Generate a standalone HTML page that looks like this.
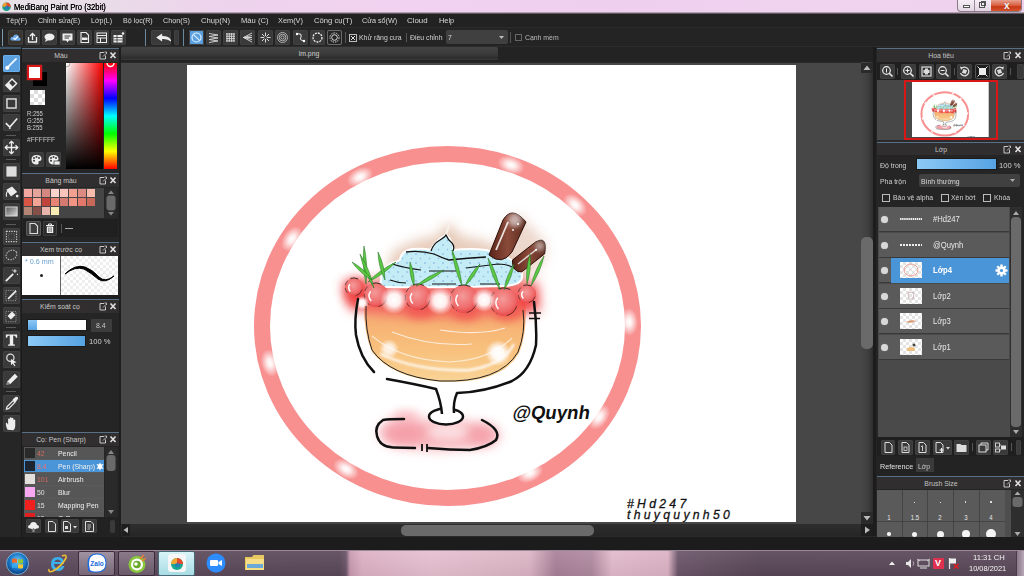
<!DOCTYPE html>
<html><head><meta charset="utf-8"><title>MediBang Paint Pro</title>
<style>
*{margin:0;padding:0;box-sizing:border-box}
html,body{width:1024px;height:576px;overflow:hidden;background:#1c1c1c;font-family:"Liberation Sans",sans-serif;}
.a{position:absolute}
.t{position:absolute;white-space:nowrap;font-size:8px;line-height:9px;color:#d2d2d2;transform:scaleX(.86);transform-origin:0 50%}
.tc{position:absolute;white-space:nowrap;font-size:8px;line-height:9px;color:#c4c4c4;transform:translateX(-50%) scaleX(.86);}
.btn{position:absolute;background:#3a3a3a;border-radius:2px;box-shadow:inset 0 0 0 1px #414141}
.btn svg{position:absolute;left:0;top:0}
.ph{position:absolute;height:14px;background:#302e2e;border-top:1px solid #56708a}
.sep{position:absolute;width:1px;background:#4a4a4a}
</style></head><body>
<div class="a" style="left:0;top:0;width:1024px;height:14px;background:linear-gradient(90deg,#e6e2e6 0%,#e9dce8 10%,#eed3ed 22%,#f1d2f0 40%,#eed0ee 60%,#f0d3ef 80%,#eed2ec 100%)"></div>
<div class="a" style="left:0;top:12px;width:1024px;height:2px;background:linear-gradient(#d9c6d8,#3a3238)"></div>
<svg class="a" style="left:1px;top:1px" width="11" height="11" viewBox="0 0 11 11"><circle cx="5.5" cy="5.8" r="4.3" fill="#1aa088"/><path d="M5.5 1.5 A4.3 4.3 0 0 1 9.8 5.8 L5.5 5.8Z" fill="#e84a2a"/><path d="M1.2 5.8 A4.3 4.3 0 0 1 5.5 1.5 L5.5 5.8Z" fill="#f0a030"/><circle cx="6" cy="6.5" r="2" fill="#2a6ad0" opacity=".7"/></svg>
<div class="t" style="left:14px;top:2px;font-size:9px;line-height:10px;color:#000;transform:scaleX(.85);text-shadow:0 0 .4px #000">MediBang Paint Pro (32bit)</div>
<div class="a" style="left:957px;top:0;width:65px;height:12px;border:1px solid #8a7a88;border-top:none;border-radius:0 0 4px 4px;background:linear-gradient(#f6eef6,#e2d6e2);overflow:hidden"><div class="a" style="left:16px;top:0;width:1px;height:12px;background:#9a8a98"></div><div class="a" style="left:33px;top:0;width:31px;height:12px;background:linear-gradient(#e8a090 0%,#d86040 45%,#c83818 55%,#d85a30 100%)"></div><div class="a" style="left:5px;top:5px;width:7px;height:3px;background:#fff;border:1px solid #555"></div><div class="a" style="left:21px;top:2px;width:6px;height:6px;border:1px solid #555;background:#eee"></div><div class="a" style="left:23px;top:1px;width:5px;height:5px;border:1px solid #555"></div><div class="a" style="left:46px;top:0px;font-size:10px;font-weight:bold;color:#fff;line-height:11px;text-shadow:0 0 1px #802010">x</div></div>
<div class="a" style="left:0;top:14px;width:1024px;height:13px;background:#222"></div>
<div class="a" style="left:0;top:27px;width:1024px;height:1px;background:#2b2b2b"></div>
<div class="t" style="left:5.6px;top:16px;color:#d8d8d8;transform:scaleX(0.875)">Tệp(F)</div>
<div class="t" style="left:37.5px;top:16px;color:#d8d8d8;transform:scaleX(0.887)">Chỉnh sửa(E)</div>
<div class="t" style="left:91px;top:16px;color:#d8d8d8;transform:scaleX(0.878)">Lớp(L)</div>
<div class="t" style="left:122.6px;top:16px;color:#d8d8d8;transform:scaleX(0.891)">Bộ lọc(R)</div>
<div class="t" style="left:163.3px;top:16px;color:#d8d8d8;transform:scaleX(0.906)">Chọn(S)</div>
<div class="t" style="left:201px;top:16px;color:#d8d8d8;transform:scaleX(0.959)">Chụp(N)</div>
<div class="t" style="left:240.5px;top:16px;color:#d8d8d8;transform:scaleX(0.952)">Màu (C)</div>
<div class="t" style="left:278px;top:16px;color:#d8d8d8;transform:scaleX(0.921)">Xem(V)</div>
<div class="t" style="left:313.7px;top:16px;color:#d8d8d8;transform:scaleX(0.957)">Công cụ(T)</div>
<div class="t" style="left:362.4px;top:16px;color:#d8d8d8;transform:scaleX(0.899)">Cửa sổ(W)</div>
<div class="t" style="left:407.4px;top:16px;color:#d8d8d8;transform:scaleX(0.985)">Cloud</div>
<div class="t" style="left:438.6px;top:16px;color:#d8d8d8;transform:scaleX(0.924)">Help</div>
<div class="a" style="left:0;top:28px;width:1024px;height:19px;background:#242424"></div>
<div class="a" style="left:0;top:46px;width:1024px;height:1px;background:#2c2c2c"></div>
<div class="a" style="left:2px;top:29px;width:1px;height:17px;background:#7a9ab0"></div>
<div class="a" style="left:145px;top:29px;width:1px;height:17px;background:#6a8aa0"></div>
<div class="a" style="left:183px;top:29px;width:1px;height:17px;background:#6a8aa0"></div>
<div class="btn" style="left:8px;top:30px;width:15px;height:15px;background:#3b3530;"><svg width="15" height="15" viewBox="0 0 15 15"><path d="M4 10.5 Q2 10.5 2.5 8.2 Q3 6.5 5 7 Q5.5 4 8.5 4.5 Q11 5 11 7.5 Q13 7.8 12.5 10 Q12 10.8 11 10.8Z" fill="#6aa8e8"/><path d="M5.5 8 L7 9.5 L9.8 6.5" fill="none" stroke="#fff" stroke-width="1.1"/></svg></div>
<div class="btn" style="left:25px;top:30px;width:15px;height:15px;"><svg width="15" height="15" viewBox="0 0 15 15"><path d="M3.5 7 V12 H11.5 V7" fill="none" stroke="#eee" stroke-width="1.3"/><path d="M7.5 10 V3.5 M5 6 L7.5 3.5 L10 6" fill="none" stroke="#eee" stroke-width="1.3"/></svg></div>
<div class="btn" style="left:42px;top:30px;width:15px;height:15px;"><svg width="15" height="15" viewBox="0 0 15 15"><ellipse cx="7.5" cy="7" rx="5" ry="3.4" fill="#eee"/><path d="M4 9 L3 12 L6.5 10Z" fill="#eee"/></svg></div>
<div class="btn" style="left:60px;top:30px;width:15px;height:15px;"><svg width="15" height="15" viewBox="0 0 15 15"><rect x="2.5" y="3.5" width="10" height="7" fill="#eee"/><path d="M6 10 L7.5 12.5 L9 10Z" fill="#eee"/><path d="M4.5 6 H10.5 M4.5 8 H9" stroke="#3a3a3a" stroke-width="1"/></svg></div>
<div class="btn" style="left:77px;top:30px;width:15px;height:15px;"><svg width="15" height="15" viewBox="0 0 15 15"><path d="M4 2.5 H9 L11.5 5 V12.5 H4Z" fill="none" stroke="#eee" stroke-width="1.1"/><rect x="5" y="7.5" width="5.5" height="2.5" fill="#eee"/></svg></div>
<div class="btn" style="left:94px;top:30px;width:15px;height:15px;"><svg width="15" height="15" viewBox="0 0 15 15"><rect x="3" y="3" width="9.5" height="9.5" fill="none" stroke="#eee" stroke-width="1"/><path d="M3 5.5 H12.5 M3 8 H12.5 M6.5 8 V12.5" stroke="#eee" stroke-width="1"/></svg></div>
<div class="btn" style="left:111px;top:30px;width:15px;height:15px;"><svg width="15" height="15" viewBox="0 0 15 15"><rect x="2.5" y="5" width="9" height="7.5" fill="#eee"/><path d="M2.5 7.5 H11.5 M2.5 10 H11.5 M6 5 V12.5" stroke="#3a3a3a" stroke-width=".8"/><circle cx="12" cy="3.5" r="1.3" fill="#eee"/></svg></div>
<div class="btn" style="left:151px;top:30px;width:20px;height:15px;"><svg width="20" height="15" viewBox="0 0 15 15"><g transform="scale(1.33 1) translate(-2 0)"><path d="M4 7.5 L8.5 3.5 V6 Q15 6 15.5 12 Q13 8.5 8.5 9 V11.5Z" fill="#eee"/></g></svg></div>
<div class="btn" style="left:174px;top:30px;width:5px;height:15px"></div>
<div class="btn" style="left:189px;top:30px;width:15px;height:15px;background:#5aa0e0;"><svg width="15" height="15" viewBox="0 0 15 15"><circle cx="7.5" cy="7.5" r="4.5" fill="none" stroke="#dff0ff" stroke-width="1.2"/><path d="M4.3 4.3 L10.7 10.7" stroke="#dff0ff" stroke-width="1.2"/></svg></div>
<div class="btn" style="left:206px;top:30px;width:15px;height:15px;"><svg width="15" height="15" viewBox="0 0 15 15"><path d="M3 3.5 L12 5 L3 6.5 L12 8 L3 9.5 L12 11 L3 12.5" fill="none" stroke="#ddd" stroke-width=".9"/></svg></div>
<div class="btn" style="left:223px;top:30px;width:15px;height:15px;"><svg width="15" height="15" viewBox="0 0 15 15"><path d="M3 4 H12 M3 6.3 H12 M3 8.6 H12 M3 10.9 H12 M4 3 V12 M6.3 3 V12 M8.6 3 V12 M10.9 3 V12" stroke="#ddd" stroke-width=".9"/></svg></div>
<div class="btn" style="left:240px;top:30px;width:15px;height:15px;"><svg width="15" height="15" viewBox="0 0 15 15"><path d="M3.5 7.5 L12 3 M3.5 7.5 L12 5.5 M3.5 7.5 L12 7.5 M3.5 7.5 L12 9.5 M3.5 7.5 L12 12" stroke="#ddd" stroke-width=".9"/></svg></div>
<div class="btn" style="left:258px;top:30px;width:15px;height:15px;"><svg width="15" height="15" viewBox="0 0 15 15"><path d="M7.5 2.5 V12.5 M2.5 7.5 H12.5 M4 4 L11 11 M11 4 L4 11" stroke="#ddd" stroke-width="1"/><circle cx="7.5" cy="7.5" r="1.5" fill="#3a3a3a"/></svg></div>
<div class="btn" style="left:275px;top:30px;width:15px;height:15px;"><svg width="15" height="15" viewBox="0 0 15 15"><circle cx="7.5" cy="7.5" r="5" fill="none" stroke="#ccc" stroke-width=".8"/><circle cx="7.5" cy="7.5" r="3.3" fill="none" stroke="#ccc" stroke-width=".8"/><circle cx="7.5" cy="7.5" r="1.6" fill="none" stroke="#ccc" stroke-width=".8"/></svg></div>
<div class="btn" style="left:293px;top:30px;width:15px;height:15px;"><svg width="15" height="15" viewBox="0 0 15 15"><path d="M4 4 Q9 3 8 7 Q6 10 11 11" fill="none" stroke="#ddd" stroke-width="1.1"/><circle cx="4" cy="4" r="1.2" fill="#fff"/><circle cx="11" cy="11" r="1.2" fill="#fff"/></svg></div>
<div class="btn" style="left:310px;top:30px;width:15px;height:15px;"><svg width="15" height="15" viewBox="0 0 15 15"><circle cx="7.5" cy="7.5" r="4.5" fill="none" stroke="#eee" stroke-width="1.3" stroke-dasharray="2 1"/></svg></div>
<div class="btn" style="left:327px;top:30px;width:15px;height:15px;background:#252525;box-shadow:inset 0 0 0 1px #6a6a6a;"><svg width="15" height="15" viewBox="0 0 15 15"><circle cx="7.5" cy="7.5" r="4.6" fill="none" stroke="#ddd" stroke-width="1" stroke-dasharray="1.5 1"/><circle cx="7.5" cy="7.5" r="2.8" fill="none" stroke="#ddd" stroke-width="1"/></svg></div>
<div class="sep" style="left:345px;top:32px;height:11px;background:#555"></div>
<div class="a" style="left:349px;top:34px;width:8px;height:8px;border:1px solid #bbb"></div>
<svg class="a" style="left:349px;top:34px" width="8" height="8"><path d="M2 2 L6 6 M6 2 L2 6" stroke="#ddd" stroke-width="1"/></svg>
<div class="t" style="left:359px;top:33px">Khử răng cưa</div>
<div class="sep" style="left:406px;top:33px;height:9px;background:#555"></div>
<div class="t" style="left:410px;top:33px">Điều chỉnh</div>
<div class="a" style="left:446px;top:30px;width:62px;height:14px;background:#404040;border-radius:2px"></div>
<div class="t" style="left:448px;top:33px;color:#ddd">7</div>
<svg class="a" style="left:499px;top:36px" width="5" height="3"><path d="M0 0 H5 L2.5 3Z" fill="#bbb"/></svg>
<div class="sep" style="left:510px;top:32px;height:11px;background:#555"></div>
<div class="a" style="left:515px;top:34px;width:7px;height:7px;border:1px solid #666"></div>
<div class="t" style="left:525px;top:33px;color:#bbb">Cạnh mềm</div>
<div class="a" style="left:0;top:47px;width:22px;height:490px;background:#262626"></div>
<div class="a" style="left:21px;top:47px;width:1px;height:490px;background:#1b1b1b"></div>
<div class="a" style="left:0;top:47px;width:21px;height:2px;background:#3e5566"></div>
<div class="btn" style="left:3px;top:55px;width:17px;height:17px;background:#5aa0de;box-shadow:inset 0 0 0 1px #6ab0ee;"><svg width="17" height="17" viewBox="0 0 15 15"><path d="M3 12 L11.5 3.5" stroke="#eef6ff" stroke-width="1.6" stroke-linecap="round"/><circle cx="3.8" cy="11.2" r="1.8" fill="#fff"/></svg></div>
<div class="btn" style="left:3px;top:75px;width:17px;height:17px;"><svg width="17" height="17" viewBox="0 0 15 15"><path d="M2.5 9 L8 3.5 L12 7.5 L6.5 13Z" fill="none" stroke="#eee" stroke-width="1.3"/><path d="M2.5 9 L5 6.5 L9 10.5 L6.5 13Z" fill="#eee"/></svg></div>
<div class="btn" style="left:3px;top:95px;width:17px;height:17px;"><svg width="17" height="17" viewBox="0 0 15 15"><rect x="3.5" y="3.5" width="8" height="8" fill="none" stroke="#ddd" stroke-width="1.3"/></svg></div>
<div class="btn" style="left:3px;top:114px;width:17px;height:17px;"><svg width="17" height="17" viewBox="0 0 15 15"><path d="M2.5 8 L6 11.5 L12.5 4" fill="none" stroke="#eee" stroke-width="1.4"/><circle cx="6" cy="12.5" r=".8" fill="#ddd"/></svg></div>
<div class="btn" style="left:3px;top:139px;width:17px;height:17px;"><svg width="17" height="17" viewBox="0 0 15 15"><path d="M7.5 2 V13 M2 7.5 H13" stroke="#eee" stroke-width="1.2"/><path d="M5.5 4 L7.5 2 L9.5 4 M5.5 11 L7.5 13 L9.5 11 M4 5.5 L2 7.5 L4 9.5 M11 5.5 L13 7.5 L11 9.5" fill="none" stroke="#eee" stroke-width="1.1"/></svg></div>
<div class="btn" style="left:3px;top:163px;width:17px;height:17px;"><svg width="17" height="17" viewBox="0 0 15 15"><rect x="3" y="3" width="9" height="9" fill="#ddd"/></svg></div>
<div class="btn" style="left:3px;top:183px;width:17px;height:17px;"><svg width="17" height="17" viewBox="0 0 15 15"><path d="M3 6 L8 3 L12.5 8 L7 12 Z" fill="#eee"/><path d="M4 7 Q2 11 3.5 12" stroke="#eee" fill="none" stroke-width="1"/><circle cx="12.5" cy="11.5" r="1.2" fill="#eee"/></svg></div>
<div class="btn" style="left:3px;top:203px;width:17px;height:17px;"><svg width="17" height="17" viewBox="0 0 15 15"><defs><linearGradient id="gr1" x1="0" y1="0" x2="1" y2="1"><stop offset="0" stop-color="#555"/><stop offset="1" stop-color="#ddd"/></linearGradient></defs><rect x="2.5" y="3.5" width="10" height="8" fill="url(#gr1)" stroke="#ddd" stroke-width=".8"/></svg></div>
<div class="btn" style="left:3px;top:228px;width:17px;height:17px;"><svg width="17" height="17" viewBox="0 0 15 15"><rect x="3" y="3" width="9" height="9" fill="none" stroke="#ccc" stroke-width="1" stroke-dasharray="1.2 1"/><rect x="5" y="5" width="5" height="5" fill="none" stroke="#888" stroke-width=".6" stroke-dasharray="1 1"/></svg></div>
<div class="btn" style="left:3px;top:247px;width:17px;height:17px;"><svg width="17" height="17" viewBox="0 0 15 15"><ellipse cx="7.5" cy="7" rx="5" ry="4" transform="rotate(-30 7.5 7)" fill="none" stroke="#bbb" stroke-width="1" stroke-dasharray="1.2 1"/></svg></div>
<div class="btn" style="left:3px;top:267px;width:17px;height:17px;"><svg width="17" height="17" viewBox="0 0 15 15"><path d="M2.5 12.5 L9 6" stroke="#eee" stroke-width="1.6"/><path d="M10.5 2 V5 M9 3.5 H12 M12.5 6 L13 7 M8 2.5 L8.5 3" stroke="#eee" stroke-width=".9"/></svg></div>
<div class="btn" style="left:3px;top:287px;width:17px;height:17px;"><svg width="17" height="17" viewBox="0 0 15 15"><rect x="2.5" y="3" width="9" height="9" fill="none" stroke="#999" stroke-width=".8" stroke-dasharray="1 1"/><path d="M4.5 10.5 L11.5 3.5" stroke="#eee" stroke-width="1.5"/></svg></div>
<div class="btn" style="left:3px;top:307px;width:17px;height:17px;"><svg width="17" height="17" viewBox="0 0 15 15"><rect x="2.5" y="4" width="9" height="9" fill="none" stroke="#999" stroke-width=".8" stroke-dasharray="1 1"/><path d="M4 8 L8 4 L11 7 L7 11Z" fill="#eee"/></svg></div>
<div class="btn" style="left:3px;top:331px;width:17px;height:17px;"><svg width="17" height="17" viewBox="0 0 15 15"><path d="M2.5 3 H12.5 V6 H11.5 Q11.2 4 9 4 V11.5 Q9 12 10.5 12 V13 H4.5 V12 Q6 12 6 11.5 V4 Q3.8 4 3.5 6 H2.5Z" fill="#eee"/></svg></div>
<div class="btn" style="left:3px;top:351px;width:17px;height:17px;"><svg width="17" height="17" viewBox="0 0 15 15"><circle cx="6.5" cy="6" r="3.2" fill="none" stroke="#ddd" stroke-width="1.1"/><path d="M7 7 L12 10 L9.5 10.5 L11 13 L10 13.5 L8.5 11 L7 12.5Z" fill="#eee"/></svg></div>
<div class="btn" style="left:3px;top:371px;width:17px;height:17px;"><svg width="17" height="17" viewBox="0 0 15 15"><path d="M3 12 L4 9 L10.5 2.5 L13 5 L6.5 11.5Z" fill="#eee"/><path d="M3 12 L4 9 L6.5 11.5Z" fill="#888"/></svg></div>
<div class="btn" style="left:3px;top:395px;width:17px;height:17px;"><svg width="17" height="17" viewBox="0 0 15 15"><path d="M3 12.5 L3.5 10.5 L9 5 L10.5 6.5 L5 12Z" fill="none" stroke="#eee" stroke-width="1.1"/><path d="M8.5 4 L11 1.8 Q12.5 1.2 13.2 2.2 Q13.8 3.2 12.5 4.5 L11 6.5Z" fill="#eee"/></svg></div>
<div class="btn" style="left:3px;top:415px;width:17px;height:17px;"><svg width="17" height="17" viewBox="0 0 15 15"><path d="M4 13 Q2.5 10 2.5 8 Q2.5 6.5 3.6 7 L4.5 8.5 V3.5 Q5.3 2.5 6 3.5 V7 V2.5 Q6.8 1.5 7.6 2.5 V7 V3 Q8.4 2 9.2 3 V7.5 V4.5 Q10 3.6 10.8 4.5 V10 Q10.5 13 9 13.5Z" fill="#eee"/></svg></div>
<div class="a" style="left:6px;top:135px;width:10px;height:1px;background:#5a5a5a"></div>
<div class="a" style="left:6px;top:159px;width:10px;height:1px;background:#5a5a5a"></div>
<div class="a" style="left:6px;top:224px;width:10px;height:1px;background:#5a5a5a"></div>
<div class="a" style="left:6px;top:327px;width:10px;height:1px;background:#5a5a5a"></div>
<div class="a" style="left:6px;top:391px;width:10px;height:1px;background:#5a5a5a"></div>
<div class="a" style="left:22px;top:47px;width:97px;height:490px;background:#252525"></div>
<div class="a" style="left:119px;top:47px;width:2px;height:490px;background:#1e1e1e"></div>
<div class="ph" style="left:22px;top:48px;width:97px"></div>
<div class="tc" style="left:61px;top:51px;color:#c8c8c8">Màu</div>
<svg class="a" style="left:99px;top:51px" width="18" height="9" viewBox="0 0 18 9"><path d="M5 1.5 H1 V8 H6.5 V4.5" fill="none" stroke="#c8c8c8" stroke-width="1"/><path d="M4 5.5 L7 2.5 M5.5 1 H7.5 V3" fill="none" stroke="#c8c8c8" stroke-width=".9"/><path d="M11.5 1.5 L16.5 7 M16.5 1.5 L11.5 7" stroke="#e0e0e0" stroke-width="1.6"/></svg>
<div class="a" style="left:33px;top:72px;width:14px;height:14px;background:#000"></div>
<div class="a" style="left:27px;top:65px;width:15px;height:15px;background:#fff;border:2px solid #d81818;box-shadow:0 0 1px #f33"></div>
<div class="a" style="left:30px;top:90px;width:15px;height:15px;background:#fff;background-image:linear-gradient(45deg,#ddd 25%,transparent 25%,transparent 75%,#ddd 75%),linear-gradient(45deg,#ddd 25%,transparent 25%,transparent 75%,#ddd 75%);background-size:8px 8px;background-position:0 0,4px 4px"></div>
<div class="t" style="left:27px;top:110px;font-size:7px;line-height:8px;color:#d0d0d0;transform:scaleX(.85)">R:255</div>
<div class="t" style="left:27px;top:117px;font-size:7px;line-height:8px;color:#d0d0d0;transform:scaleX(.85)">G:255</div>
<div class="t" style="left:27px;top:124px;font-size:7px;line-height:8px;color:#d0d0d0;transform:scaleX(.85)">B:255</div>
<div class="t" style="left:27px;top:136px;font-size:7px;line-height:8px;color:#c8c8c8;transform:scaleX(.95)">#FFFFFF</div>
<div class="btn" style="left:29px;top:152px;width:15px;height:15px"><svg width="15" height="15"><path d="M7.5 3 Q12.5 3 12.5 7 Q12.5 9 10.5 9 Q9 9 9.5 10.5 Q10 12.5 7.5 12.5 Q2.5 12.5 2.5 7.5 Q2.5 3 7.5 3Z" fill="#eee"/><circle cx="5" cy="6" r="1" fill="#3a3a3a"/><circle cx="7.5" cy="5" r="1" fill="#3a3a3a"/><circle cx="10" cy="6" r="1" fill="#3a3a3a"/><circle cx="5" cy="8.8" r="1" fill="#3a3a3a"/></svg></div>
<div class="btn" style="left:46px;top:152px;width:15px;height:15px"><svg width="15" height="15"><path d="M7.5 3 Q12.5 3 12.5 7 Q12.5 9 10.5 9 Q9 9 9.5 10.5 Q10 12.5 7.5 12.5 Q2.5 12.5 2.5 7.5 Q2.5 3 7.5 3Z" fill="#eee"/><circle cx="5" cy="6" r="1" fill="#3a3a3a"/><circle cx="7.5" cy="5" r="1" fill="#3a3a3a"/><circle cx="10" cy="6" r="1" fill="#3a3a3a"/><circle cx="5" cy="8.8" r="1" fill="#3a3a3a"/><rect x="8" y="9" width="6" height="4" fill="#eee" stroke="#3a3a3a" stroke-width=".7"/></svg></div>
<div class="a" style="left:66px;top:63px;width:37px;height:106px;background:linear-gradient(to top,#000 0%,rgba(0,0,0,0) 100%),linear-gradient(to right,#fff 0%,#f00 100%)"></div>
<div class="a" style="left:104px;top:63px;width:13px;height:106px;background:linear-gradient(#f00 0%,#f0f 16.7%,#00f 33.3%,#0ff 50%,#0f0 66.7%,#ff0 83.3%,#f00 100%)"></div>
<svg class="a" style="left:104px;top:63px" width="13" height="6"><path d="M3 0 A3.5 3.5 0 0 0 10 0" fill="none" stroke="#fff" stroke-width="1.4"/></svg>
<svg class="a" style="left:66px;top:63px" width="6" height="6"><path d="M0 4 A4 4 0 0 0 4 0" fill="none" stroke="#aaa" stroke-width="1"/></svg>
<div class="ph" style="left:22px;top:173px;width:97px"></div>
<div class="tc" style="left:61px;top:176px;color:#c8c8c8">Bảng màu</div>
<svg class="a" style="left:99px;top:176px" width="18" height="9" viewBox="0 0 18 9"><path d="M5 1.5 H1 V8 H6.5 V4.5" fill="none" stroke="#c8c8c8" stroke-width="1"/><path d="M4 5.5 L7 2.5 M5.5 1 H7.5 V3" fill="none" stroke="#c8c8c8" stroke-width=".9"/><path d="M11.5 1.5 L16.5 7 M16.5 1.5 L11.5 7" stroke="#e0e0e0" stroke-width="1.6"/></svg>
<div class="a" style="left:23px;top:188px;width:81px;height:30px;background:#454545"></div>
<div class="a" style="left:24px;top:189px;width:8px;height:8px;background:#f2a8a0"></div>
<div class="a" style="left:33px;top:189px;width:8px;height:8px;background:#e4a49c"></div>
<div class="a" style="left:42px;top:189px;width:8px;height:8px;background:#d48880"></div>
<div class="a" style="left:51px;top:189px;width:8px;height:8px;background:#f8d4cc"></div>
<div class="a" style="left:60px;top:189px;width:8px;height:8px;background:#f9c4bc"></div>
<div class="a" style="left:69px;top:189px;width:8px;height:8px;background:#f2a090"></div>
<div class="a" style="left:78px;top:189px;width:8px;height:8px;background:#dc8a82"></div>
<div class="a" style="left:87px;top:189px;width:8px;height:8px;background:#f8bcac"></div>
<div class="a" style="left:24px;top:198px;width:8px;height:8px;background:#d85444"></div>
<div class="a" style="left:33px;top:198px;width:8px;height:8px;background:#f2a494"></div>
<div class="a" style="left:42px;top:198px;width:8px;height:8px;background:#c0443c"></div>
<div class="a" style="left:51px;top:198px;width:8px;height:8px;background:#e88474"></div>
<div class="a" style="left:60px;top:198px;width:8px;height:8px;background:#d47a70"></div>
<div class="a" style="left:69px;top:198px;width:8px;height:8px;background:#f29484"></div>
<div class="a" style="left:78px;top:198px;width:8px;height:8px;background:#e2786a"></div>
<div class="a" style="left:87px;top:198px;width:8px;height:8px;background:#c86858"></div>
<div class="a" style="left:24px;top:207px;width:8px;height:8px;background:#b48474"></div>
<div class="a" style="left:33px;top:207px;width:8px;height:8px;background:#845048"></div>
<div class="a" style="left:42px;top:207px;width:8px;height:8px;background:#e8b4ac"></div>
<div class="a" style="left:51px;top:207px;width:8px;height:8px;background:#f8ecb4"></div>
<div class="a" style="left:105px;top:188px;width:12px;height:30px;background:#2a2a2a"></div>
<svg class="a" style="left:105px;top:188px" width="12" height="30"><path d="M3 6 L6 2.5 L9 6Z" fill="#888"/><rect x="1.5" y="7.5" width="9" height="15" rx="3" fill="#6a6a6a"/><path d="M3 24 L6 27.5 L9 24Z" fill="#888"/></svg>
<div class="a" style="left:23px;top:219px;width:95px;height:18px;background:#202020"></div>
<div class="btn" style="left:26px;top:221px;width:15px;height:15px;background:#3e3e3e;box-shadow:inset 0 0 0 1px #5a5a5a"><svg width="15" height="15"><path d="M4 2.5 H9 L11.5 5 V12.5 H4Z" fill="none" stroke="#ddd" stroke-width="1.1"/></svg></div>
<div class="btn" style="left:43px;top:221px;width:14px;height:15px;background:#2c2c2c"><svg width="14" height="15"><path d="M3 4.5 H11 M5.5 4.5 V3 H8.5 V4.5" stroke="#eee" fill="none" stroke-width="1"/><rect x="3.8" y="5.5" width="6.4" height="6.5" fill="#eee"/><path d="M5.6 6.5 V11 M7 6.5 V11 M8.4 6.5 V11" stroke="#555" stroke-width=".6"/></svg></div>
<div class="a" style="left:61px;top:224px;width:1px;height:9px;background:#555"></div>
<div class="a" style="left:65px;top:228px;width:8px;height:1px;background:#aaa"></div>
<div class="ph" style="left:22px;top:242px;width:97px"></div>
<div class="tc" style="left:61px;top:245px;color:#c8c8c8">Xem trước cọ</div>
<svg class="a" style="left:99px;top:245px" width="18" height="9" viewBox="0 0 18 9"><path d="M5 1.5 H1 V8 H6.5 V4.5" fill="none" stroke="#c8c8c8" stroke-width="1"/><path d="M4 5.5 L7 2.5 M5.5 1 H7.5 V3" fill="none" stroke="#c8c8c8" stroke-width=".9"/><path d="M11.5 1.5 L16.5 7 M16.5 1.5 L11.5 7" stroke="#e0e0e0" stroke-width="1.6"/></svg>
<div class="a" style="left:22px;top:256px;width:38px;height:39px;background:#fff"></div>
<div class="a" style="left:60px;top:256px;width:1px;height:39px;background:#666"></div>
<div class="a" style="left:61px;top:256px;width:57px;height:39px;background:#fff;background-image:linear-gradient(45deg,#eee 25%,transparent 25%,transparent 75%,#eee 75%),linear-gradient(45deg,#eee 25%,transparent 25%,transparent 75%,#eee 75%);background-size:6px 6px;background-position:0 0,3px 3px"></div>
<div class="t" style="left:25px;top:257px;font-size:8px;color:#6aa0d0;transform:scaleX(.9)">* 0.6 mm</div>
<div class="a" style="left:40px;top:274px;width:3px;height:3px;border-radius:50%;background:#222"></div>
<svg class="a" style="left:61px;top:256px" width="57" height="39"><path d="M4 18 Q14 8 24 11 Q32 14 38 21 Q44 27 53 20 Q44 28 37 23 Q30 17 23 13 Q14 10 4 18Z" fill="#000" stroke="#000" stroke-width="1"/></svg>
<div class="a" style="left:22px;top:295px;width:97px;height:4px;background:#1e1e1e"></div>
<div class="ph" style="left:22px;top:299px;width:97px"></div>
<div class="tc" style="left:60px;top:302px;color:#c8c8c8">Kiểm soát cọ</div>
<svg class="a" style="left:99px;top:302px" width="18" height="9" viewBox="0 0 18 9"><path d="M5 1.5 H1 V8 H6.5 V4.5" fill="none" stroke="#c8c8c8" stroke-width="1"/><path d="M4 5.5 L7 2.5 M5.5 1 H7.5 V3" fill="none" stroke="#c8c8c8" stroke-width=".9"/><path d="M11.5 1.5 L16.5 7 M16.5 1.5 L11.5 7" stroke="#e0e0e0" stroke-width="1.6"/></svg>
<div class="a" style="left:28px;top:320px;width:58px;height:10px;background:#fff;box-shadow:0 0 0 1px #1a1a1a"></div>
<div class="a" style="left:28px;top:320px;width:9px;height:10px;background:linear-gradient(#8cc8f4,#5aa6e6)"></div>
<div class="a" style="left:91px;top:319px;width:21px;height:13px;background:#3c3c3c;border-radius:1px"></div>
<div class="t" style="left:96px;top:321px;color:#c8c8c8">8.4</div>
<div class="a" style="left:28px;top:336px;width:57px;height:10px;background:linear-gradient(90deg,#8ccaf6,#56a2e2);box-shadow:0 0 0 1px #1a1a1a"></div>
<div class="t" style="left:89px;top:337px;color:#d0d0d0;transform:scaleX(.95)">100 %</div>
<div class="ph" style="left:22px;top:432px;width:97px"></div>
<div class="tc" style="left:61px;top:435px;color:#c8c8c8">Cọ: Pen (Sharp)</div>
<svg class="a" style="left:99px;top:435px" width="18" height="9" viewBox="0 0 18 9"><path d="M5 1.5 H1 V8 H6.5 V4.5" fill="none" stroke="#c8c8c8" stroke-width="1"/><path d="M4 5.5 L7 2.5 M5.5 1 H7.5 V3" fill="none" stroke="#c8c8c8" stroke-width=".9"/><path d="M11.5 1.5 L16.5 7 M16.5 1.5 L11.5 7" stroke="#e0e0e0" stroke-width="1.6"/></svg>
<div class="a" style="left:24px;top:447px;width:80px;height:70px;background:#5a5a5a;overflow:hidden">
<div class="a" style="left:0;top:0px;width:80px;height:12px;background:#565656"></div>
<div class="a" style="left:1px;top:1px;width:10px;height:10px;background:#2a2a2a"></div>
<div class="t" style="left:13px;top:2px;color:#d06a60">42</div>
<div class="t" style="left:34px;top:2px;color:#f0f0f0">Pencil</div>
<div class="a" style="left:0;top:13px;width:80px;height:12px;background:#4a94d8"></div>
<div class="a" style="left:1px;top:14px;width:10px;height:10px;background:#1c2530"></div>
<div class="t" style="left:13px;top:15px;color:#f07070">8.4</div>
<div class="t" style="left:34px;top:15px;color:#f0f0f0">Pen (Sharp)</div>
<div class="a" style="left:0;top:26px;width:80px;height:12px;background:#565656"></div>
<div class="a" style="left:1px;top:27px;width:10px;height:10px;background:#e4e0dc"></div>
<div class="t" style="left:13px;top:28px;color:#d06a60">101</div>
<div class="t" style="left:34px;top:28px;color:#f0f0f0">Airbrush</div>
<div class="a" style="left:0;top:39px;width:80px;height:12px;background:#565656"></div>
<div class="a" style="left:1px;top:40px;width:10px;height:10px;background:#f8a8f0"></div>
<div class="t" style="left:13px;top:41px;color:#e0e0e0">50</div>
<div class="t" style="left:34px;top:41px;color:#f0f0f0">Blur</div>
<div class="a" style="left:0;top:52px;width:80px;height:12px;background:#565656"></div>
<div class="a" style="left:1px;top:53px;width:10px;height:10px;background:#f02020"></div>
<div class="t" style="left:13px;top:54px;color:#e0e0e0">15</div>
<div class="t" style="left:34px;top:54px;color:#f0f0f0">Mapping Pen</div>
<div class="a" style="left:0;top:65px;width:80px;height:12px;background:#565656"></div>
<div class="a" style="left:1px;top:66px;width:10px;height:10px;background:#e02020"></div>
<div class="t" style="left:13px;top:67px;color:#e0e0e0">15</div>
<div class="t" style="left:34px;top:67px;color:#f0f0f0">G-Pen</div>
</div>
<svg class="a" style="left:96px;top:462px" width="8" height="9"><path d="M4 0.5 L5 2.5 L7.5 2 L6 4.5 L7.5 7 L5 6.5 L4 8.5 L3 6.5 L0.5 7 L2 4.5 L0.5 2 L3 2.5Z" fill="#fff"/></svg>
<div class="a" style="left:105px;top:447px;width:12px;height:70px;background:#2a2a2a"></div>
<svg class="a" style="left:105px;top:447px" width="12" height="70"><path d="M3 7 L6 3 L9 7Z" fill="#888"/><rect x="1.5" y="8" width="9" height="16" rx="3" fill="#6a6a6a"/><path d="M3 63 L6 67 L9 63Z" fill="#888"/></svg>
<div class="a" style="left:22px;top:517px;width:97px;height:20px;background:#222"></div>
<div class="btn" style="left:26px;top:519px;width:15px;height:14px"><svg width="15" height="14" viewBox="0 0 15 14"><path d="M4 9.5 Q1.8 9.5 2 7.5 Q2.3 5.8 4 6 Q4.5 3 7.5 3 Q10.5 3 11 6 Q13 6 13 8 Q13 9.5 11 9.5Z" fill="#eee"/><path d="M7.5 13 V7.5 M5.3 9.7 L7.5 7.5 L9.7 9.7" stroke="#eee" fill="none" stroke-width="1.6"/><path d="M7.5 9 V13" stroke="#3a3a3a" stroke-width=".6"/></svg></div>
<div class="btn" style="left:45px;top:519px;width:13px;height:14px"><svg width="13" height="14" viewBox="0 0 13 14"><path d="M3.5 2.5 H8 L10.5 5 V12.5 H3.5Z" fill="none" stroke="#ddd" stroke-width="1"/></svg></div>
<div class="btn" style="left:61px;top:519px;width:18px;height:14px"><svg width="18" height="14" viewBox="0 0 18 14"><path d="M2.5 2.5 H7 L9.5 5 V12.5 H2.5Z" fill="none" stroke="#ddd" stroke-width="1"/><rect x="4" y="7" width="3" height="3" fill="#ddd"/><path d="M12 7 H16 L14 9.5Z" fill="#ddd"/></svg></div>
<div class="btn" style="left:82px;top:519px;width:15px;height:14px"><svg width="15" height="14" viewBox="0 0 15 14"><path d="M3.5 2.5 H9 L11.5 5 V12.5 H3.5Z" fill="none" stroke="#ddd" stroke-width="1"/><path d="M5.5 6 H9 M5.5 8 H9 M5.5 10 H8" stroke="#ddd" stroke-width=".8"/></svg></div>
<div class="a" style="left:110px;top:520px;width:5px;height:13px;background:#3a3a3a;border-radius:2px"></div>
<div class="a" style="left:121px;top:47px;width:755px;height:16px;background:#232323"></div>
<div class="a" style="left:121px;top:47px;width:377px;height:13px;background:linear-gradient(#444 0%,#3a3a3a 55%,#2c2c2c 85%,#3a3a3a 100%);border-radius:2px 2px 0 0"></div>
<div class="tc" style="left:309px;top:49px;color:#d0d0d0">lm.png</div>
<div class="a" style="left:121px;top:62px;width:740px;height:1px;background:#2a2a2a"></div>
<div class="a" style="left:121px;top:63px;width:740px;height:461px;background:#474747"></div>
<div class="a" style="left:861px;top:62px;width:12px;height:462px;background:linear-gradient(90deg,#474747,#3e3e3e 60%,#2e2e2e)"></div>
<svg class="a" style="left:861px;top:63px" width="12" height="10"><rect width="12" height="10" fill="#2a2a2a"/><path d="M2.5 7 L6 2.5 L9.5 7Z" fill="#bbb"/></svg>
<div class="a" style="left:861px;top:237px;width:12px;height:112px;background:#6a6a6a;border-radius:5px"></div>
<svg class="a" style="left:861px;top:512px" width="12" height="12"><rect width="12" height="12" fill="#2a2a2a"/><path d="M2.5 4 L6 8.5 L9.5 4Z" fill="#bbb"/></svg>
<div class="a" style="left:121px;top:524px;width:752px;height:12px;background:linear-gradient(#2e2e2e,#262626)"></div>
<svg class="a" style="left:122px;top:524px" width="8" height="12"><rect width="8" height="12" fill="#1e1e1e"/><path d="M6 3 L1.5 6 L6 9Z" fill="#bbb"/></svg>
<div class="a" style="left:401px;top:525px;width:193px;height:11px;background:#6a6a6a;border-radius:5px"></div>
<svg class="a" style="left:861px;top:524px" width="12" height="12"><rect width="12" height="12" fill="#1e1e1e"/><path d="M4 2.5 L9 6 L4 9.5Z" fill="#bbb"/></svg>
<div class="a" style="left:873px;top:47px;width:3px;height:490px;background:#1c1c1c"></div>
<div class="a" style="left:121px;top:536px;width:755px;height:1px;background:#2a2a2a"></div>
<svg class="a" style="left:187px;top:65px" width="609" height="457" viewBox="187 65 609 457"><defs>
<filter id="b05" x="-10%" y="-10%" width="120%" height="120%"><feGaussianBlur stdDeviation=".5"/></filter>
<filter id="b1" x="-50%" y="-50%" width="200%" height="200%"><feGaussianBlur stdDeviation="1"/></filter>
<filter id="b2" x="-50%" y="-50%" width="200%" height="200%"><feGaussianBlur stdDeviation="2.5"/></filter>
<filter id="b4" x="-50%" y="-50%" width="200%" height="200%"><feGaussianBlur stdDeviation="4"/></filter>
<filter id="b6" x="-50%" y="-50%" width="200%" height="200%"><feGaussianBlur stdDeviation="6"/></filter>
<filter id="b8" x="-50%" y="-50%" width="200%" height="200%"><feGaussianBlur stdDeviation="8"/></filter>
<radialGradient id="glow"><stop offset="0" stop-color="#fff" stop-opacity="1"/><stop offset=".45" stop-color="#fff" stop-opacity=".9"/><stop offset="1" stop-color="#fff" stop-opacity="0"/></radialGradient>
<radialGradient id="glow2"><stop offset="0" stop-color="#fff" stop-opacity="1"/><stop offset=".3" stop-color="#fff" stop-opacity=".85"/><stop offset="1" stop-color="#fff" stop-opacity="0"/></radialGradient>
<pattern id="dots" width="9" height="9" patternUnits="userSpaceOnUse"><rect width="9" height="9" fill="#c4ecf6"/><circle cx="2" cy="2" r=".8" fill="#78aee0"/><circle cx="6.5" cy="6.5" r=".8" fill="#8cbce6"/></pattern>
<linearGradient id="body" x1="0" y1="0" x2="0" y2="1"><stop offset="0" stop-color="#f6a088"/><stop offset=".3" stop-color="#f6b274"/><stop offset=".65" stop-color="#f8c27e"/><stop offset="1" stop-color="#f9d498"/></linearGradient>
<linearGradient id="choc" x1="0" y1="0" x2="1" y2="0"><stop offset="0" stop-color="#5a2418"/><stop offset=".5" stop-color="#8a4a3a"/><stop offset="1" stop-color="#5a2a1e"/></linearGradient>
</defs><g id="drw"><rect x="187" y="65" width="609" height="457" fill="#fff"/><ellipse cx="447.5" cy="326" rx="185.5" ry="172" fill="none" stroke="#f89090" stroke-width="16" filter="url(#b05)"/><ellipse cx="292" cy="239" rx="14" ry="9" transform="rotate(-56.9 292 239)" fill="url(#glow2)"/><ellipse cx="360" cy="177" rx="14" ry="9" transform="rotate(-26.8 360 177)" fill="url(#glow2)"/><ellipse cx="511" cy="165" rx="14" ry="9" transform="rotate(18.7 511 165)" fill="url(#glow2)"/><ellipse cx="575" cy="205" rx="14" ry="9" transform="rotate(42.2 575 205)" fill="url(#glow2)"/><ellipse cx="629" cy="322" rx="14" ry="9" transform="rotate(88.5 629 322)" fill="url(#glow2)"/><ellipse cx="599" cy="417" rx="14" ry="9" transform="rotate(124.9 599 417)" fill="url(#glow2)"/><ellipse cx="530" cy="473" rx="14" ry="9" transform="rotate(154.2 530 473)" fill="url(#glow2)"/><ellipse cx="346" cy="469" rx="14" ry="9" transform="rotate(-148.6 346 469)" fill="url(#glow2)"/><ellipse cx="270" cy="363" rx="14" ry="9" transform="rotate(-103.6 270 363)" fill="url(#glow2)"/><ellipse cx="440" cy="435" rx="56" ry="15" fill="#f7b4ba" filter="url(#b6)"/><ellipse cx="402" cy="432" rx="22" ry="13" fill="#f49aa4" filter="url(#b6)" opacity=".8"/><ellipse cx="483" cy="435" rx="16" ry="11" fill="#f49aa4" filter="url(#b6)" opacity=".7"/><ellipse cx="406" cy="416" rx="14" ry="6" fill="#f6a8b0" filter="url(#b4)" opacity=".6"/><ellipse cx="448" cy="432" rx="20" ry="8" fill="#fff" filter="url(#b4)" opacity=".55"/><path d="M492 262 L510 218 Q520 210 528 224 L544 240 Q550 252 540 268 L515 285 Z" fill="#e6c8b8" filter="url(#b6)" opacity=".7"/><path d="M392 252 Q420 236 438 236 Q448 212 460 236 Q500 240 522 268 L522 292 L380 292Z" fill="#e0bca6" filter="url(#b6)" opacity=".75"/><path d="M364 298 Q363 332 372 352 Q392 378 442 382 Q502 384 519 353 Q528 332 525 298 Z" fill="url(#body)"/><path d="M342 282 Q440 274 538 282 L540 312 Q440 322 350 310Z" fill="#f25252" filter="url(#b6)" opacity=".8"/><ellipse cx="356" cy="292" rx="12" ry="14" fill="#f03434" filter="url(#b4)" opacity=".75"/><ellipse cx="527" cy="298" rx="10" ry="12" fill="#f03434" filter="url(#b4)" opacity=".6"/><ellipse cx="420" cy="312" rx="14" ry="7" fill="#f04848" filter="url(#b4)" opacity=".6"/><ellipse cx="466" cy="314" rx="14" ry="7" fill="#f04848" filter="url(#b4)" opacity=".6"/><ellipse cx="508" cy="314" rx="14" ry="7" fill="#f04040" filter="url(#b4)" opacity=".6"/><path d="M380 354 Q420 372 470 370 Q504 364 514 344" fill="none" stroke="#fff" stroke-width="2.4" opacity=".9" filter="url(#b1)"/><path d="M372 336 Q400 360 450 362 Q490 360 512 338" fill="none" stroke="#fff" stroke-width="1.2" opacity=".6"/><path d="M392 332 Q430 347 472 344 M440 330 Q480 336 505 328" fill="none" stroke="#fff" stroke-width="1.2" opacity=".7"/><circle cx="498" cy="353" r="13" fill="url(#glow)"/><circle cx="389" cy="349" r="10" fill="url(#glow)" opacity=".8"/><path d="M382 286 Q380 270 392 264 Q399 262 401 260 Q402 252 412 250 Q424 249 431 251 Q436 242 446 236 Q452 242 453 251 Q470 249 486 251 Q505 255 515 264 Q522 270 521 278 Q520 284 505 285 Q440 287 382 286 Z" fill="none" stroke="#fff" stroke-width="4"/><path d="M382 286 Q380 270 392 264 Q399 262 401 260 Q402 252 412 250 Q424 249 431 251 Q436 242 446 236 Q452 242 453 251 Q470 249 486 251 Q505 255 515 264 Q522 270 521 278 Q520 284 505 285 Q440 287 382 286 Z" fill="url(#dots)"/><path d="M406 252 Q420 250 434 254 Q442 258 449 260 Q468 258 486 257" fill="none" stroke="#111" stroke-width="1.3"/><path d="M392 264 Q405 268 421 270 M429 271 H456 M390 280 Q398 283 406 283 M432 284 H456 M466 268 Q482 266 498 264 Q512 264 519 272 M480 284 H500" fill="none" stroke="#111" stroke-width="1.2"/><path d="M431 251 Q433 244 440 240 Q445 237 446 235 Q448 240 452 243 Q455 247 453 251" fill="none" stroke="#111" stroke-width="1.3"/><path d="M446 234 Q449 226 450 222" fill="none" stroke="#f8f0e8" stroke-width="2.2"/><path d="M489 255 L503 220 Q512 205 526 222 L512 252 Q502 266 489 255Z" fill="url(#choc)" stroke="#2a1008" stroke-width="1"/><path d="M496 250 L508 222" stroke="#fff" stroke-width="1.8" opacity=".85"/><ellipse cx="515" cy="220" rx="7" ry="7" fill="#fff" opacity=".6" filter="url(#b2)"/><circle cx="518" cy="224" r="1" fill="#fff"/><circle cx="513" cy="230" r=".9" fill="#fff"/><path d="M512.4 260.1 L535.4 242.1 Q547.9 235 544.6 253.9 L521.6 271.9 Q512 272 512.4 260.1Z" fill="url(#choc)" stroke="#2a1008" stroke-width="1"/><path d="M518 264 L537 249" stroke="#fff" stroke-width="1.4" opacity=".8"/><ellipse cx="540" cy="246" rx="5" ry="5" fill="#fff" opacity=".55" filter="url(#b2)"/><circle cx="536" cy="250" r=".9" fill="#fff"/><radialGradient id="cher" cx=".45" cy=".4" r=".6"><stop offset="0" stop-color="#f49a9a"/><stop offset=".7" stop-color="#f06c6c"/><stop offset="1" stop-color="#e84a4a"/></radialGradient><circle cx="354" cy="287" r="9" fill="url(#cher)"/><path d="M347.7 280.7 A9 9 0 0 0 349.5 294.6" fill="none" stroke="#2a2a2a" stroke-width="1" stroke-dasharray="5 3" opacity=".6"/><path d="M362.1 289.7 A9 9 0 0 1 355.8 295.7" fill="none" stroke="#3a2020" stroke-width="1" opacity=".7"/><path d="M349.9 284.3 Q347.2 287.9 350.4 291.5" fill="none" stroke="#fff" stroke-width="1.5"/><path d="M350.4 278.4 Q354.0 277.1 358.1 278.9" fill="none" stroke="#222" stroke-width=".9"/><circle cx="376" cy="295" r="12" fill="url(#cher)"/><path d="M367.6 286.6 A12 12 0 0 0 370.0 305.2" fill="none" stroke="#2a2a2a" stroke-width="1" stroke-dasharray="5 3" opacity=".6"/><path d="M386.8 298.6 A12 12 0 0 1 378.4 306.6" fill="none" stroke="#3a2020" stroke-width="1" opacity=".7"/><path d="M370.6 291.4 Q367.0 296.2 371.2 301.0" fill="none" stroke="#fff" stroke-width="1.5"/><path d="M371.2 283.6 Q376.0 281.8 381.4 284.2" fill="none" stroke="#222" stroke-width=".9"/><circle cx="418" cy="297" r="13" fill="url(#cher)"/><path d="M408.9 287.9 A13 13 0 0 0 411.5 308.1" fill="none" stroke="#2a2a2a" stroke-width="1" stroke-dasharray="5 3" opacity=".6"/><path d="M429.7 300.9 A13 13 0 0 1 420.6 309.6" fill="none" stroke="#3a2020" stroke-width="1" opacity=".7"/><path d="M412.1 293.1 Q408.2 298.3 412.8 303.5" fill="none" stroke="#fff" stroke-width="1.5"/><path d="M412.8 284.6 Q418.0 282.7 423.9 285.3" fill="none" stroke="#222" stroke-width=".9"/><circle cx="464" cy="299" r="14" fill="url(#cher)"/><path d="M454.2 289.2 A14 14 0 0 0 457.0 310.9" fill="none" stroke="#2a2a2a" stroke-width="1" stroke-dasharray="5 3" opacity=".6"/><path d="M476.6 303.2 A14 14 0 0 1 466.8 312.6" fill="none" stroke="#3a2020" stroke-width="1" opacity=".7"/><path d="M457.7 294.8 Q453.5 300.4 458.4 306.0" fill="none" stroke="#fff" stroke-width="1.5"/><path d="M458.4 285.7 Q464.0 283.6 470.3 286.4" fill="none" stroke="#222" stroke-width=".9"/><circle cx="504" cy="302" r="14" fill="url(#cher)"/><path d="M494.2 292.2 A14 14 0 0 0 497.0 313.9" fill="none" stroke="#2a2a2a" stroke-width="1" stroke-dasharray="5 3" opacity=".6"/><path d="M516.6 306.2 A14 14 0 0 1 506.8 315.6" fill="none" stroke="#3a2020" stroke-width="1" opacity=".7"/><path d="M497.7 297.8 Q493.5 303.4 498.4 309.0" fill="none" stroke="#fff" stroke-width="1.5"/><path d="M498.4 288.7 Q504.0 286.6 510.3 289.4" fill="none" stroke="#222" stroke-width=".9"/><circle cx="527" cy="294" r="9" fill="url(#cher)"/><path d="M520.7 287.7 A9 9 0 0 0 522.5 301.6" fill="none" stroke="#2a2a2a" stroke-width="1" stroke-dasharray="5 3" opacity=".6"/><path d="M535.1 296.7 A9 9 0 0 1 528.8 302.7" fill="none" stroke="#3a2020" stroke-width="1" opacity=".7"/><path d="M523.0 291.3 Q520.2 294.9 523.4 298.5" fill="none" stroke="#fff" stroke-width="1.5"/><path d="M523.4 285.4 Q527.0 284.1 531.0 285.9" fill="none" stroke="#222" stroke-width=".9"/><circle cx="394" cy="300" r="14" fill="url(#glow)"/><circle cx="440" cy="301" r="14" fill="url(#glow)"/><circle cx="484" cy="300" r="12" fill="url(#glow)"/><circle cx="362" cy="303" r="7" fill="url(#glow)"/><path d="M366 284 Q368.2 264.8 364 246 Q361.8 265.2 366 284Z" fill="#5cc844" stroke="#1e6a1e" stroke-width=".5"/><path d="M368 282 Q383.9 274.6 396 262 Q380.1 269.4 368 282Z" fill="#5cc844" stroke="#1e6a1e" stroke-width=".5"/><path d="M374 288 Q370.0 269.8 360 254 Q364.0 272.2 374 288Z" fill="#5cc844" stroke="#1e6a1e" stroke-width=".5"/><path d="M385 280 Q384.6 265.2 378 252 Q378.4 266.8 385 280Z" fill="#5cc844" stroke="#1e6a1e" stroke-width=".5"/><path d="M372 280 Q364.1 268.6 352 262 Q359.9 273.4 372 280Z" fill="#5cc844" stroke="#1e6a1e" stroke-width=".5"/><path d="M414 286 Q415.2 273.5 410 262 Q408.8 274.5 414 286Z" fill="#5cc844" stroke="#1e6a1e" stroke-width=".5"/><path d="M416 286 Q431.6 280.8 444 270 Q428.4 275.2 416 286Z" fill="#5cc844" stroke="#1e6a1e" stroke-width=".5"/><path d="M462 286 Q460.1 267.1 452 250 Q453.9 268.9 462 286Z" fill="#5cc844" stroke="#1e6a1e" stroke-width=".5"/><path d="M465 286 Q475.1 276.8 480 264 Q469.9 273.2 465 286Z" fill="#5cc844" stroke="#1e6a1e" stroke-width=".5"/><path d="M500 290 Q497.0 272.9 488 258 Q491.0 275.1 500 290Z" fill="#5cc844" stroke="#1e6a1e" stroke-width=".5"/><path d="M504 290 Q512.0 278.1 514 264 Q506.0 275.9 504 290Z" fill="#5cc844" stroke="#1e6a1e" stroke-width=".5"/><path d="M527 284 Q531.7 269.3 530 254 Q525.3 268.7 527 284Z" fill="#5cc844" stroke="#1e6a1e" stroke-width=".5"/><path d="M531 286 Q540.4 272.3 544 256 Q534.6 269.7 531 286Z" fill="#5cc844" stroke="#1e6a1e" stroke-width=".5"/><path d="M358 299 Q354 320 356 335 Q360 358 374 372" fill="none" stroke="#111" stroke-width="2.5" stroke-linecap="round"/><path d="M387 379 Q415 384 436 389" fill="none" stroke="#111" stroke-width="2.5" stroke-linecap="round"/><path d="M534 302 Q537 325 536 345 Q530 372 512 381 Q485 392 457 393" fill="none" stroke="#111" stroke-width="2.5" stroke-linecap="round"/><path d="M366 306 Q365 330 372 350 Q390 376 440 381 Q500 383 518 352 Q526 332 523 310" fill="none" stroke="#222" stroke-width="1" /><path d="M529 313 H541 M529 318.5 H540" stroke="#111" stroke-width="1.6"/><ellipse cx="446" cy="416.5" rx="17" ry="8" fill="#fff" stroke="#111" stroke-width="2.5"/><path d="M436 389 Q440 402 442 413 L454 413 Q453 402 457 393" fill="#fff" stroke="none"/><path d="M436 389 Q441 402 442 414 M457 393 Q453 402 454 413" fill="none" stroke="#111" stroke-width="2.5"/><path d="M404 419 Q388 419 383 420 Q374 426 377 436 Q380 447 393 447.5 L415 448" fill="none" stroke="#111" stroke-width="2.5" stroke-linecap="round"/><path d="M422 444 V451 M427 444 V452" stroke="#111" stroke-width="1.8"/><path d="M428 448 Q450 450 470 450 Q488 447 496 440 Q502 430 482 420" fill="none" stroke="#111" stroke-width="2.5" stroke-linecap="round"/><text x="0" y="0" transform="translate(512 418.5) skewX(-9)" font-family="Liberation Sans" font-weight="bold" font-size="19" fill="#111" textLength="77" lengthAdjust="spacingAndGlyphs">@Quynh</text><text x="627" y="507.5" font-family="Liberation Sans" font-style="italic" font-size="12.2" fill="#111" stroke="#111" stroke-width=".3" letter-spacing="3.3">#Hd247</text><text x="627" y="518.5" font-family="Liberation Sans" font-style="italic" font-size="12.2" fill="#111" stroke="#111" stroke-width=".3" letter-spacing="3.3">thuyquynh50</text></g></svg>
<div class="a" style="left:876px;top:47px;width:148px;height:491px;background:#242424"></div>
<div class="ph" style="left:877px;top:48px;width:147px;height:14px"></div>
<div class="tc" style="left:941px;top:51px;color:#c4c4c4">Hoa tiêu</div>
<svg class="a" style="left:1003px;top:51px" width="20" height="9" viewBox="0 0 20 9"><path d="M5 1.5 H1 V8 H6.5 V4.5" fill="none" stroke="#c8c8c8" stroke-width="1"/><path d="M4 5.5 L7 2.5 M5.5 1 H7.5 V3" fill="none" stroke="#c8c8c8" stroke-width=".9"/><path d="M12.5 1.5 L17.5 7 M17.5 1.5 L12.5 7" stroke="#e0e0e0" stroke-width="1.6"/></svg>
<div class="a" style="left:877px;top:62px;width:147px;height:18px;background:#1f1f1f"></div>
<div class="btn" style="left:880px;top:64px;width:15px;height:15px;"><svg width="15" height="15"><circle cx="6.5" cy="6.5" r="3.8" fill="none" stroke="#eee" stroke-width="1.2"/><path d="M9.2 9.2 L12.5 12.5" stroke="#eee" stroke-width="1.6"/><path d="M6.5 4.5 V8.5" stroke="#eee" stroke-width="1"/></svg></div>
<div class="btn" style="left:901px;top:64px;width:15px;height:15px;"><svg width="15" height="15"><circle cx="6.5" cy="6.5" r="3.8" fill="none" stroke="#eee" stroke-width="1.2"/><path d="M9.2 9.2 L12.5 12.5" stroke="#eee" stroke-width="1.6"/><path d="M4.5 6.5 H8.5 M6.5 4.5 V8.5" stroke="#eee" stroke-width="1"/></svg></div>
<div class="btn" style="left:919px;top:64px;width:15px;height:15px;"><svg width="15" height="15"><rect x="3" y="3" width="9" height="9" fill="none" stroke="#ddd" stroke-width="1.2"/><path d="M6 4.5 H9 V6 H10.5 V9 H9 V10.5 H6 V9 H4.5 V6 H6Z" fill="#ddd"/></svg></div>
<div class="btn" style="left:936px;top:64px;width:15px;height:15px;"><svg width="15" height="15"><circle cx="6.5" cy="6.5" r="3.8" fill="none" stroke="#eee" stroke-width="1.2"/><path d="M9.2 9.2 L12.5 12.5" stroke="#eee" stroke-width="1.6"/><path d="M4.5 6.5 H8.5" stroke="#eee" stroke-width="1"/></svg></div>
<div class="btn" style="left:957px;top:64px;width:15px;height:15px;"><svg width="15" height="15"><path d="M3.5 9 A4.3 4.3 0 1 0 5 4" fill="none" stroke="#ddd" stroke-width="1.3"/><path d="M3 2.5 L6 3.5 L4 6Z" fill="#ddd"/><rect x="5.5" y="5.5" width="4" height="4" transform="rotate(20 7.5 7.5)" fill="#ddd"/></svg></div>
<div class="btn" style="left:975px;top:64px;width:15px;height:15px;background:#1e1e1e;box-shadow:inset 0 0 0 1px #555;"><svg width="15" height="15"><rect x="4" y="4" width="7" height="7" fill="#eee"/><path d="M2.5 2.5 L5 5 M12.5 2.5 L10 5 M2.5 12.5 L5 10 M12.5 12.5 L10 10" stroke="#eee" stroke-width="1"/></svg></div>
<div class="btn" style="left:992px;top:64px;width:15px;height:15px;"><svg width="15" height="15"><path d="M11.5 9 A4.3 4.3 0 1 1 10 4" fill="none" stroke="#ddd" stroke-width="1.3"/><path d="M12 2.5 L9 3.5 L11 6Z" fill="#ddd"/><rect x="5.5" y="5.5" width="4" height="4" transform="rotate(-20 7.5 7.5)" fill="#ddd"/></svg></div>
<div class="a" style="left:897px;top:68px;width:1px;height:7px;background:#555"></div>
<div class="a" style="left:954px;top:68px;width:1px;height:7px;background:#555"></div>
<div class="a" style="left:1010px;top:68px;width:1px;height:7px;background:#555"></div>
<div class="btn" style="left:1017px;top:64px;width:7px;height:15px"></div>
<div class="a" style="left:877px;top:80px;width:147px;height:60px;background:#474747"></div>
<div class="a" style="left:904px;top:80px;width:94px;height:60px;border:2px solid #d81818"></div>
<div class="a" style="left:906px;top:82px;width:90px;height:55px;overflow:hidden"><svg class="a" style="left:6px;top:-1px" width="76.7" height="57.6" viewBox="187 65 609 457"><use href="#drw"/></svg></div>
<div class="a" style="left:877px;top:140px;width:147px;height:2px;background:#2a2a2a"></div>
<div class="ph" style="left:877px;top:142px;width:147px;height:13px"></div>
<div class="tc" style="left:941px;top:145px;color:#c4c4c4">Lớp</div>
<svg class="a" style="left:1003px;top:145px" width="20" height="9" viewBox="0 0 20 9"><path d="M5 1.5 H1 V8 H6.5 V4.5" fill="none" stroke="#c8c8c8" stroke-width="1"/><path d="M4 5.5 L7 2.5 M5.5 1 H7.5 V3" fill="none" stroke="#c8c8c8" stroke-width=".9"/><path d="M12.5 1.5 L17.5 7 M17.5 1.5 L12.5 7" stroke="#e0e0e0" stroke-width="1.6"/></svg>
<div class="a" style="left:877px;top:156px;width:147px;height:51px;background:#252525"></div>
<div class="t" style="left:880px;top:161px;color:#d0d0d0">Độ trong</div>
<div class="a" style="left:917px;top:159px;width:79px;height:10px;background:linear-gradient(90deg,#8ccaf6,#56a2e2);box-shadow:0 0 0 1px #1a1a1a"></div>
<div class="t" style="left:999px;top:161px;color:#d0d0d0;transform:scaleX(.95)">100 %</div>
<div class="t" style="left:880px;top:177px;color:#d0d0d0">Pha trộn</div>
<div class="a" style="left:919px;top:174px;width:101px;height:13px;background:#404040;border-radius:2px"></div>
<div class="t" style="left:921px;top:177px;color:#d8d8d8">Bình thường</div>
<svg class="a" style="left:1010px;top:179px" width="5" height="3"><path d="M0 0 H5 L2.5 3Z" fill="#aaa"/></svg>
<div class="a" style="left:882px;top:194px;width:8px;height:8px;border:1px solid #bbb"></div>
<div class="t" style="left:893px;top:193px;color:#d0d0d0">Bảo vệ alpha</div>
<div class="a" style="left:941px;top:194px;width:8px;height:8px;border:1px solid #bbb"></div>
<div class="t" style="left:951px;top:193px;color:#d0d0d0">Xén bớt</div>
<div class="a" style="left:983px;top:194px;width:8px;height:8px;border:1px solid #bbb"></div>
<div class="t" style="left:994px;top:193px;color:#d0d0d0">Khóa</div>
<div class="a" style="left:878px;top:207px;width:132px;height:230px;background:#4a4a4a"></div>
<div class="a" style="left:879px;top:207px;width:130px;height:24px;background:#5a5a5a"></div>
<div class="a" style="left:879px;top:231px;width:130px;height:1px;background:#3a3a3a"></div>
<div class="a" style="left:881px;top:216px;width:7px;height:7px;border-radius:50%;background:#d8d8d8;box-shadow:0 0 1px #aaa"></div>
<svg class="a" style="left:900px;top:216px" width="22" height="6"><path d="M0 3 H22" stroke="#eee" stroke-width="2.2" stroke-dasharray="1.5 .6"/></svg>
<div class="t" style="left:933px;top:214px;font-size:8.5px;line-height:10px;transform:scaleX(.9);color:#e8e8e8;">#Hd247</div>
<div class="a" style="left:879px;top:233px;width:130px;height:24px;background:#5a5a5a"></div>
<div class="a" style="left:879px;top:257px;width:130px;height:1px;background:#3a3a3a"></div>
<div class="a" style="left:881px;top:242px;width:7px;height:7px;border-radius:50%;background:#d8d8d8;box-shadow:0 0 1px #aaa"></div>
<svg class="a" style="left:900px;top:242px" width="22" height="6"><path d="M0 3 H22" stroke="#eee" stroke-width="2" stroke-dasharray="2 1"/></svg>
<div class="t" style="left:933px;top:240px;font-size:8.5px;line-height:10px;transform:scaleX(.9);color:#e8e8e8;">@Quynh</div>
<div class="a" style="left:879px;top:258px;width:130px;height:24px;background:#5a5a5a"></div>
<div class="a" style="left:879px;top:282px;width:130px;height:1px;background:#3a3a3a"></div>
<div class="a" style="left:891px;top:258px;width:118px;height:25px;background:#4a94d8"></div>
<div class="a" style="left:881px;top:267px;width:7px;height:7px;border-radius:50%;background:#d8d8d8;box-shadow:0 0 1px #aaa"></div>
<div class="a" style="left:900px;top:262px;width:22px;height:16px;background:#fff;background-image:linear-gradient(45deg,#e4e4e4 25%,transparent 25%,transparent 75%,#e4e4e4 75%),linear-gradient(45deg,#e4e4e4 25%,transparent 25%,transparent 75%,#e4e4e4 75%);background-size:6px 6px;background-position:0 0,3px 3px"></div>
<svg class="a" style="left:900px;top:262px" width="22" height="16"><ellipse cx="11" cy="8" rx="7" ry="6" fill="none" stroke="#f0a090" stroke-width="1"/></svg>
<div class="t" style="left:933px;top:265px;font-size:8.5px;line-height:10px;transform:scaleX(.9);font-weight:bold;color:#fff;">Lớp4</div>
<div class="a" style="left:879px;top:284px;width:130px;height:24px;background:#5a5a5a"></div>
<div class="a" style="left:879px;top:308px;width:130px;height:1px;background:#3a3a3a"></div>
<div class="a" style="left:881px;top:293px;width:7px;height:7px;border-radius:50%;background:#d8d8d8;box-shadow:0 0 1px #aaa"></div>
<div class="a" style="left:900px;top:288px;width:22px;height:16px;background:#fff;background-image:linear-gradient(45deg,#e4e4e4 25%,transparent 25%,transparent 75%,#e4e4e4 75%),linear-gradient(45deg,#e4e4e4 25%,transparent 25%,transparent 75%,#e4e4e4 75%);background-size:6px 6px;background-position:0 0,3px 3px"></div>
<svg class="a" style="left:900px;top:288px" width="22" height="16"><path d="M8 5 Q11 3 14 5 L13 11 H9Z" fill="none" stroke="#c8a8a8" stroke-width=".8"/></svg>
<div class="t" style="left:933px;top:291px;font-size:8.5px;line-height:10px;transform:scaleX(.9);color:#e8e8e8;">Lớp2</div>
<div class="a" style="left:879px;top:309px;width:130px;height:24px;background:#5a5a5a"></div>
<div class="a" style="left:879px;top:333px;width:130px;height:1px;background:#3a3a3a"></div>
<div class="a" style="left:881px;top:318px;width:7px;height:7px;border-radius:50%;background:#d8d8d8;box-shadow:0 0 1px #aaa"></div>
<div class="a" style="left:900px;top:313px;width:22px;height:16px;background:#fff;background-image:linear-gradient(45deg,#e4e4e4 25%,transparent 25%,transparent 75%,#e4e4e4 75%),linear-gradient(45deg,#e4e4e4 25%,transparent 25%,transparent 75%,#e4e4e4 75%);background-size:6px 6px;background-position:0 0,3px 3px"></div>
<svg class="a" style="left:900px;top:313px" width="22" height="16"><path d="M6 9 Q11 6 16 8 Q11 11 6 9Z" fill="#d89870"/></svg>
<div class="t" style="left:933px;top:316px;font-size:8.5px;line-height:10px;transform:scaleX(.9);color:#e8e8e8;">Lớp3</div>
<div class="a" style="left:879px;top:335px;width:130px;height:24px;background:#5a5a5a"></div>
<div class="a" style="left:879px;top:359px;width:130px;height:1px;background:#3a3a3a"></div>
<div class="a" style="left:881px;top:344px;width:7px;height:7px;border-radius:50%;background:#d8d8d8;box-shadow:0 0 1px #aaa"></div>
<div class="a" style="left:900px;top:339px;width:22px;height:16px;background:#fff;background-image:linear-gradient(45deg,#e4e4e4 25%,transparent 25%,transparent 75%,#e4e4e4 75%),linear-gradient(45deg,#e4e4e4 25%,transparent 25%,transparent 75%,#e4e4e4 75%);background-size:6px 6px;background-position:0 0,3px 3px"></div>
<svg class="a" style="left:900px;top:339px" width="22" height="16"><path d="M7 9 Q11 7 15 9 V12 H7Z" fill="#f0c080"/><circle cx="14" cy="6" r="1.5" fill="#444"/></svg>
<div class="t" style="left:933px;top:342px;font-size:8.5px;line-height:10px;transform:scaleX(.9);color:#e8e8e8;">Lớp1</div>
<svg class="a" style="left:995px;top:264px" width="13" height="13" viewBox="0 0 13 13"><g fill="#fff"><circle cx="6.5" cy="6.5" r="4"/><rect x="5.3" y="0.5" width="2.4" height="3" transform="rotate(0 6.5 6.5)"/><rect x="5.3" y="0.5" width="2.4" height="3" transform="rotate(45 6.5 6.5)"/><rect x="5.3" y="0.5" width="2.4" height="3" transform="rotate(90 6.5 6.5)"/><rect x="5.3" y="0.5" width="2.4" height="3" transform="rotate(135 6.5 6.5)"/><rect x="5.3" y="0.5" width="2.4" height="3" transform="rotate(180 6.5 6.5)"/><rect x="5.3" y="0.5" width="2.4" height="3" transform="rotate(225 6.5 6.5)"/><rect x="5.3" y="0.5" width="2.4" height="3" transform="rotate(270 6.5 6.5)"/><rect x="5.3" y="0.5" width="2.4" height="3" transform="rotate(315 6.5 6.5)"/></g><circle cx="6.5" cy="6.5" r="1.6" fill="#4a94d8"/></svg>
<div class="a" style="left:1010px;top:207px;width:12px;height:230px;background:#2e2e2e"></div>
<svg class="a" style="left:1010px;top:207px" width="12" height="230"><path d="M3 8 L6 4 L9 8Z" fill="#aaa"/><rect x="1" y="10" width="10" height="210" rx="4" fill="#6a6a6a"/><path d="M3 223 L6 227 L9 223Z" fill="#aaa"/></svg>
<div class="a" style="left:877px;top:437px;width:147px;height:19px;background:#1f1f1f"></div>
<div class="btn" style="left:881px;top:440px;width:14px;height:15px"><svg width="14" height="15" viewBox="0 0 14 15"><path d="M4 2.5 H8.5 L11 5 V12.5 H4Z" fill="none" stroke="#ddd" stroke-width="1"/></svg></div>
<div class="btn" style="left:898px;top:440px;width:15px;height:15px"><svg width="15" height="15" viewBox="0 0 15 15"><path d="M4 2.5 H8.5 L11 5 V12.5 H4Z" fill="none" stroke="#ddd" stroke-width="1"/><rect x="6" y="7" width="3" height="3.5" fill="none" stroke="#ddd" stroke-width=".8"/></svg></div>
<div class="btn" style="left:915px;top:440px;width:15px;height:15px"><svg width="15" height="15" viewBox="0 0 15 15"><path d="M4 2.5 H8.5 L11 5 V12.5 H4Z" fill="none" stroke="#ddd" stroke-width="1"/><path d="M7.5 11 V6 M6 7 L7.5 5.5" stroke="#ddd" stroke-width=".9" fill="none"/></svg></div>
<div class="btn" style="left:933px;top:440px;width:19px;height:15px"><svg width="19" height="15" viewBox="0 0 19 15"><path d="M3 2.5 H7.5 L10 5 V12.5 H3Z" fill="none" stroke="#ddd" stroke-width="1"/><path d="M6.5 10 H10.5 M8.5 8 V12" stroke="#eee" stroke-width="1.2"/><path d="M13 7 H17 L15 9.5Z" fill="#ddd"/></svg></div>
<div class="btn" style="left:954px;top:440px;width:15px;height:15px"><svg width="15" height="15" viewBox="0 0 15 15"><path d="M2.5 4 H6.5 L7.5 5 H12.5 V12 H2.5Z" fill="#ddd"/></svg></div>
<div class="btn" style="left:976px;top:440px;width:15px;height:15px"><svg width="15" height="15" viewBox="0 0 15 15"><rect x="3" y="5" width="7" height="7" fill="none" stroke="#ddd" stroke-width="1"/><path d="M5 5 V3 H12 V10 H10" fill="none" stroke="#ddd" stroke-width="1"/></svg></div>
<div class="btn" style="left:993px;top:440px;width:15px;height:15px"><svg width="15" height="15" viewBox="0 0 15 15"><rect x="2.5" y="3" width="4" height="4" fill="none" stroke="#ddd" stroke-width=".9"/><rect x="2.5" y="9" width="4" height="3" fill="none" stroke="#ddd" stroke-width=".9"/><rect x="8" y="5.5" width="5" height="4" fill="#ddd"/><path d="M6.5 5 H8 M6.5 10 H8" stroke="#ddd" stroke-width=".8"/></svg></div>
<div class="a" style="left:972px;top:443px;width:1px;height:8px;background:#555"></div>
<div class="a" style="left:1011px;top:443px;width:1px;height:8px;background:#555"></div>
<div class="btn" style="left:1016px;top:440px;width:5px;height:15px"></div>
<div class="a" style="left:877px;top:456px;width:147px;height:20px;background:#232323"></div>
<div class="t" style="left:880px;top:462px;color:#e0e0e0;transform:scaleX(.9)">Reference</div>
<div class="a" style="left:916px;top:458px;width:18px;height:14px;background:#3a3a3a"></div>
<div class="t" style="left:918px;top:462px;color:#c8c8c8">Lớp</div>
<div class="ph" style="left:877px;top:476px;width:147px;height:13px"></div>
<div class="tc" style="left:941px;top:479px;color:#c4c4c4">Brush Size</div>
<svg class="a" style="left:1003px;top:479px" width="20" height="9" viewBox="0 0 20 9"><path d="M5 1.5 H1 V8 H6.5 V4.5" fill="none" stroke="#c8c8c8" stroke-width="1"/><path d="M4 5.5 L7 2.5 M5.5 1 H7.5 V3" fill="none" stroke="#c8c8c8" stroke-width=".9"/><path d="M12.5 1.5 L17.5 7 M17.5 1.5 L12.5 7" stroke="#e0e0e0" stroke-width="1.6"/></svg>
<div class="a" style="left:877px;top:490px;width:128px;height:48px;background:#5a5a5a"></div>
<div class="a" style="left:902px;top:490px;width:1px;height:48px;background:#444"></div>
<div class="a" style="left:927px;top:490px;width:1px;height:48px;background:#444"></div>
<div class="a" style="left:953px;top:490px;width:1px;height:48px;background:#444"></div>
<div class="a" style="left:979px;top:490px;width:1px;height:48px;background:#444"></div>
<div class="a" style="left:877px;top:521px;width:128px;height:1px;background:#444"></div>
<div class="tc" style="left:889.0px;top:513px;color:#e8e8e8;font-size:7px">1</div>
<div class="a" style="left:914.0px;top:501.5px;width:1px;height:1px;background:#ddd"></div>
<div class="tc" style="left:914.5px;top:513px;color:#e8e8e8;font-size:7px">1.5</div>
<div class="a" style="left:939.5px;top:501.5px;width:1px;height:1px;background:#ddd"></div>
<div class="tc" style="left:940.0px;top:513px;color:#e8e8e8;font-size:7px">2</div>
<div class="a" style="left:964.8px;top:501.2px;width:1.5px;height:1.5px;background:#ddd"></div>
<div class="tc" style="left:965.5px;top:513px;color:#e8e8e8;font-size:7px">3</div>
<div class="a" style="left:990.0px;top:501.0px;width:2px;height:2px;background:#ddd"></div>
<div class="tc" style="left:991.0px;top:513px;color:#e8e8e8;font-size:7px">4</div>
<div class="a" style="left:887.2px;top:532.2px;width:3.5px;height:3.5px;border-radius:50%;background:#f4f4f4"></div>
<div class="a" style="left:912.0px;top:531.5px;width:5px;height:5px;border-radius:50%;background:#f4f4f4"></div>
<div class="a" style="left:936.5px;top:530.5px;width:7px;height:7px;border-radius:50%;background:#f4f4f4"></div>
<div class="a" style="left:961.5px;top:530.0px;width:8px;height:8px;border-radius:50%;background:#f4f4f4"></div>
<div class="a" style="left:986.0px;top:529.0px;width:10px;height:10px;border-radius:50%;background:#f4f4f4"></div>
<div class="a" style="left:1005px;top:490px;width:6px;height:48px;background:#4e4e4e"></div>
<div class="a" style="left:1011px;top:490px;width:13px;height:48px;background:#2e2e2e"></div>
<svg class="a" style="left:1011px;top:490px" width="13" height="48"><path d="M3.5 5 L6.5 1.5 L9.5 5Z" fill="#aaa"/><rect x="1.5" y="7" width="10" height="10" rx="3" fill="#6a6a6a"/><path d="M3.5 42 L6.5 46 L9.5 42Z" fill="#aaa"/></svg>
<div class="a" style="left:0;top:537px;width:1024px;height:13px;background:#1c1c1c"></div>
<div class="a" style="left:0;top:550px;width:1024px;height:26px;background:linear-gradient(90deg,#5c4a5c 0px,#5a4858 340px,#6a5468 346px,#c898b0 350px,#dcb0c4 362px,#e6c0d0 430px,#dcb4c4 530px,#a88098 556px,#b08aa0 592px,#e2bacb 612px,#dcb2c4 668px,#6a5468 678px,#584656 760px,#5a4858 1024px)"></div>
<div class="a" style="left:0;top:550px;width:1024px;height:1px;background:#9a8898"></div>
<div class="a" style="left:0;top:551px;width:1024px;height:25px;background:linear-gradient(rgba(255,255,255,.08),rgba(0,0,0,.05))"></div>
<svg class="a" style="left:5px;top:552px" width="25" height="23" viewBox="0 0 25 23"><defs><radialGradient id="orb" cx=".5" cy=".4" r=".6"><stop offset="0" stop-color="#7ad0f8"/><stop offset=".6" stop-color="#1a78c8"/><stop offset="1" stop-color="#0a3a78"/></radialGradient></defs><circle cx="12.5" cy="11.5" r="11" fill="url(#orb)" stroke="#8ac8e8" stroke-width=".8"/><path d="M7 7 Q9 6 12 7 V11 Q9 10 7 11Z" fill="#f26a2a"/><path d="M13 7 Q16 8 18 7 V11 Q16 12 13 11Z" fill="#8ac83a"/><path d="M7 12 Q9 11 12 12 V16 Q9 15 7 16Z" fill="#3aa8f0"/><path d="M13 12 Q16 13 18 12 V16 Q16 17 13 16Z" fill="#f8c830"/></svg>
<svg class="a" style="left:47px;top:553px" width="21" height="21" viewBox="0 0 21 21"><path d="M4 11 Q4 4 11 4 Q17 4 17 11 H7 Q7 15 11 15 Q13.5 15 15 13 H17.5 Q16 18 11 18 Q4 18 4 11Z M7.5 9 H14 Q13.5 6.5 10.5 6.5 Q8 6.5 7.5 9Z" fill="#3ab0ee"/><path d="M2 16 Q1 20 6 18 Q14 14 19 5 Q20 1 15 3" fill="none" stroke="#f0c030" stroke-width="1.6"/></svg>
<div class="a" style="left:78px;top:551px;width:37px;height:25px;background:linear-gradient(#a89aa8,#7a6a7a);border:1px solid #3a2a3a;border-radius:2px;opacity:.9"></div>
<svg class="a" style="left:86px;top:552px" width="22" height="22" viewBox="0 0 22 22"><path d="M11 1.5 Q20.5 1.5 20.5 11 Q20.5 20.5 11 20.5 Q5 20.5 3 19 L2.5 20 Q1.5 15 1.5 11 Q1.5 1.5 11 1.5Z" fill="#1a6ae0"/><path d="M11 2.5 Q19.5 2.5 19.5 11 Q19.5 19.5 11 19.5 Q6 19.5 4 18 Q3 14 3 11 Q3 2.5 11 2.5Z" fill="#fff"/><text x="11" y="13.5" font-family="Liberation Sans" font-size="6.5" font-weight="bold" fill="#1a6ae0" text-anchor="middle">Zalo</text></svg>
<div class="a" style="left:118px;top:551px;width:37px;height:25px;background:linear-gradient(#8a7a8a,#6a5a6a);border:1px solid #3a2a3a;border-radius:2px"></div>
<svg class="a" style="left:127px;top:553px" width="20" height="21" viewBox="0 0 20 21"><circle cx="10" cy="11.5" r="8.5" fill="#88c83a"/><circle cx="10" cy="11.5" r="6" fill="#fff"/><circle cx="10" cy="11.5" r="3.8" fill="#6aa828"/><circle cx="9" cy="11" r="1.8" fill="#fff"/><path d="M13 6 L17 2 M15 8 L19 5" stroke="#f08030" stroke-width="1.5"/></svg>
<div class="a" style="left:158px;top:551px;width:37px;height:25px;background:linear-gradient(#d8f4f8,#a8dce4);border:1px solid #4a6a78;border-radius:2px"></div>
<svg class="a" style="left:166px;top:552px" width="22" height="22" viewBox="0 0 22 22"><rect x="2" y="2" width="18" height="18" rx="3" fill="#f6f6f6"/><circle cx="11" cy="12" r="6" fill="#18a890"/><path d="M11 6 A6 6 0 0 1 17 12 L11 12Z" fill="#e84a2a"/><path d="M5 12 A6 6 0 0 1 11 6 L11 12Z" fill="#f4a830"/><circle cx="11.5" cy="13" r="2.5" fill="#2a6ad0" opacity=".6"/></svg>
<svg class="a" style="left:206px;top:553px" width="20" height="20" viewBox="0 0 20 20"><circle cx="10" cy="10" r="9.5" fill="#2d8cff"/><rect x="4" y="7" width="8" height="6" rx="1" fill="#fff"/><path d="M12.5 9 L16 7 V13 L12.5 11Z" fill="#fff"/></svg>
<svg class="a" style="left:244px;top:553px" width="22" height="20" viewBox="0 0 22 20"><path d="M1 4 H8 L9.5 2 H20 V17 H1Z" fill="#e8c860"/><rect x="2" y="6" width="18" height="11" fill="#f6de88"/><rect x="3" y="11" width="16" height="4" fill="#6aa8d8"/></svg>
<svg class="a" style="left:889px;top:561px" width="6" height="4"><path d="M0 4 L3 0.5 L6 4Z" fill="#eee"/></svg>
<svg class="a" style="left:905px;top:558px" width="11" height="11"><path d="M1 4 H3 L6 1 V10 L3 7 H1Z" fill="#e8e8e8"/><path d="M8 3.5 Q9.5 5.5 8 7.5" stroke="#ccc" fill="none" stroke-width=".8"/></svg>
<svg class="a" style="left:917px;top:558px" width="13" height="11"><rect x="1" y="2" width="11" height="6" fill="none" stroke="#ddd" stroke-width="1"/><path d="M3 10 H10" stroke="#ddd" stroke-width="1"/><path d="M0 1 L3 3 M13 1 L10 3" stroke="#ddd" stroke-width=".7"/></svg>
<div class="a" style="left:933px;top:558px;width:11px;height:11px;background:#e03050;border-radius:1px"></div>
<div class="a" style="left:935px;top:557px;font-size:9px;font-weight:bold;color:#fff;line-height:12px">V</div>
<svg class="a" style="left:948px;top:557px" width="12" height="13"><path d="M1.5 1 V12" stroke="#eee" stroke-width="1.2"/><path d="M2 1.5 H8 V6.5 H2Z" fill="#f0f0f0"/><path d="M6 7 L10.5 11.5 M10.5 7 L6 11.5" stroke="#e02020" stroke-width="1.6"/></svg>
<div class="t" style="left:973px;top:553px;color:#f4f4f4;font-size:8px;transform:scaleX(.96)">11:31 CH</div>
<div class="t" style="left:969px;top:564px;color:#f4f4f4;font-size:8px;transform:scaleX(.93)">10/08/2021</div>
<div class="a" style="left:1016px;top:551px;width:8px;height:25px;background:linear-gradient(90deg,#8a7a88,#b8a8b8);border-left:1px solid #4a3a48"></div>
</body></html>
